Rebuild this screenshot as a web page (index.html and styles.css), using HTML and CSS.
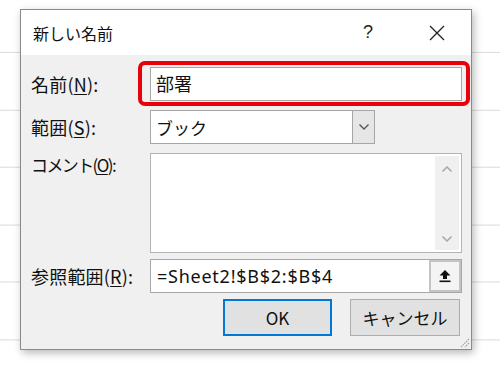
FILE: index.html
```html
<!DOCTYPE html>
<html lang="ja">
<head>
<meta charset="utf-8">
<link rel="stylesheet" href="styles.css">
</head>
<body>
<div class="dialog">
  <div class="titlebar">
    <span class="title">新しい名前</span>
    <span class="help">?</span>
    <span class="close">
      <svg width="16" height="16" viewBox="0 0 16 16"><path d="M1 1 L15 15 M15 1 L1 15" stroke="#222" stroke-width="1.3" fill="none"/></svg>
    </span>
  </div>
  <div class="content">
    <div class="row">
      <label class="lbl">名前(<u>N</u>):</label>
      <div class="field name-field">部署</div>
    </div>
    <div class="row">
      <label class="lbl">範囲(<u>S</u>):</label>
      <div class="field combo">
        <span class="combo-text">ブック</span>
        <span class="combo-btn">
          <svg width="12" height="8" viewBox="0 0 12 8"><path d="M1.5 1.5 L6 6 L10.5 1.5" stroke="#555" stroke-width="1.4" fill="none"/></svg>
        </span>
      </div>
    </div>
    <div class="row row-top">
      <label class="lbl lbl-top lbl-kana">コメント(<u>O</u>):</label>
      <div class="field memo">
        <div class="memo-area"></div>
        <div class="scrollbar">
          <svg width="12" height="8" viewBox="0 0 12 8"><path d="M1.5 6.5 L6 2 L10.5 6.5" stroke="#a6a6a6" stroke-width="1.5" fill="none"/></svg>
          <svg width="12" height="8" viewBox="0 0 12 8"><path d="M1.5 1.5 L6 6 L10.5 1.5" stroke="#a6a6a6" stroke-width="1.5" fill="none"/></svg>
        </div>
      </div>
    </div>
    <div class="row row-ref">
      <label class="lbl">参照範囲(<u>R</u>):</label>
      <div class="field ref">
        <span class="ref-text">=Sheet2!$B$2:$B$4</span>
        <span class="ref-btn">
          <svg width="14" height="14" viewBox="0 0 14 14"><path d="M7 1 L12.5 6.5 L9 6.5 L9 10 L5 10 L5 6.5 L1.5 6.5 Z" fill="#111"/><rect x="1.5" y="11.5" width="11" height="1.6" fill="#111"/></svg>
        </span>
      </div>
    </div>
    <div class="buttons">
      <button class="btn btn-ok">OK</button>
      <button class="btn">キャンセル</button>
    </div>
  </div>
  <div class="highlight"></div>
  <svg class="grip" width="12" height="12" viewBox="0 0 12 12"><path d="M11 3 L3 11 M11 7 L7 11" stroke="#a0a0a0" stroke-width="1.2" stroke-dasharray="1.5 1"/></svg>
</div>
</body>
</html>
```

FILE: styles.css
```css
html, body {
  margin: 0;
  padding: 0;
}
body {
  width: 500px;
  height: 368px;
  overflow: hidden;
  background-color: #ffffff;
  background-image:
    repeating-linear-gradient(to right, transparent 0, transparent 162px, #dadada 162px, #dadada 163px),
    repeating-linear-gradient(to bottom, transparent 0, transparent 52px, #dadada 52px, #dadada 53px, transparent 53px, transparent 110px, #dadada 110px, #dadada 111px, transparent 111px, transparent 114.8px);
  background-size: 162px 100%, 100% 114.8px;
  background-position: 1px 0, 0 0;
  font-family: "Noto Sans CJK JP", "Noto Sans", sans-serif;
  color: #111;
  padding: 9px 0 0 20px;
  box-sizing: border-box;
}
.dialog {
  position: relative;
  width: 452px;
  height: 341px;
  box-sizing: border-box;
  border: 1px solid #8a8a8a;
  background: #f0f0f0;
  box-shadow: 2px 3px 8px rgba(0, 0, 0, 0.28);
}
.titlebar {
  height: 45px;
  background: #ffffff;
  display: flex;
  align-items: center;
  padding-left: 12px;
}
.title {
  font-size: 16px;
  flex: 1;
  color: #111;
}
.help {
  font-family: "Liberation Sans", sans-serif;
  font-size: 18px;
  width: 20px;
  text-align: center;
  margin-right: 51px;
  color: #222;
}
.close {
  width: 16px;
  height: 16px;
  margin-right: 26px;
  display: flex;
}
.content {
  padding: 12px 9px 0 10px;
  display: flex;
  flex-direction: column;
}
.row {
  display: flex;
  align-items: center;
  height: 34px;
  margin-bottom: 9px;
}
.row-top {
  align-items: flex-start;
  height: 100px;
  margin-bottom: 6px;
}
.row-ref {
  margin-bottom: 6px;
}
.lbl {
  width: 119px;
  flex: none;
  font-size: 18px;
  letter-spacing: 0.2px;
}
.lbl-top {
  margin-top: -1px;
}
.lbl-kana {
  font-size: 17px;
  letter-spacing: -1.6px;
}
.lbl u {
  text-underline-offset: 2px;
}
.field {
  box-sizing: border-box;
  height: 34px;
  border: 1px solid #a6a6a6;
  background: #ffffff;
}
.name-field {
  width: 313px;
  font-size: 18px;
  padding-left: 5px;
  line-height: 31px;
}
.combo {
  width: 225px;
  display: flex;
  align-items: center;
}
.combo-text {
  flex: 1;
  font-size: 17px;
  padding-left: 5px;
}
.combo-btn {
  width: 23px;
  height: 34px;
  margin: -1px -1px -1px 0;
  box-sizing: border-box;
  border: 1px solid #a6a6a6;
  background: #e6e6e6;
  display: flex;
  align-items: center;
  justify-content: center;
}
.memo {
  width: 312px;
  height: 100px;
  display: flex;
  padding: 2px 2px 2px 0;
  border-color: #b4b4b4;
}
.memo-area {
  flex: 1;
}
.scrollbar {
  width: 24px;
  background: #f0f0f0;
  display: flex;
  flex-direction: column;
  justify-content: space-between;
  align-items: center;
  padding: 9px 0 7px;
}
.ref {
  width: 312px;
  display: flex;
  align-items: center;
}
.ref-text {
  flex: 1;
  font-family: "Noto Sans", sans-serif;
  font-size: 18px;
  padding-left: 6px;
  letter-spacing: 0.75px;
}
.ref-btn {
  width: 32px;
  height: 32px;
  box-sizing: border-box;
  border: 2px solid #c4c4c4;
  background: #f4f4f4;
  display: flex;
  align-items: center;
  justify-content: center;
}
.buttons {
  display: flex;
  justify-content: flex-end;
  gap: 18px;
  padding-right: 2px;
}
.btn {
  width: 110px;
  height: 37px;
  box-sizing: border-box;
  border: 1px solid #adadad;
  background: #e1e1e1;
  font-family: "Noto Sans CJK JP", "Noto Sans", sans-serif;
  font-size: 17px;
  color: #111;
  padding: 0;
}
.btn-ok {
  width: 109px;
  border: 2px solid #0078d7;
}
.highlight {
  position: absolute;
  left: 117px;
  top: 51px;
  width: 332px;
  height: 45px;
  box-sizing: border-box;
  border: 4px solid #e8000b;
  border-radius: 7px;
}
.grip {
  position: absolute;
  right: 1px;
  bottom: 1px;
}
```
